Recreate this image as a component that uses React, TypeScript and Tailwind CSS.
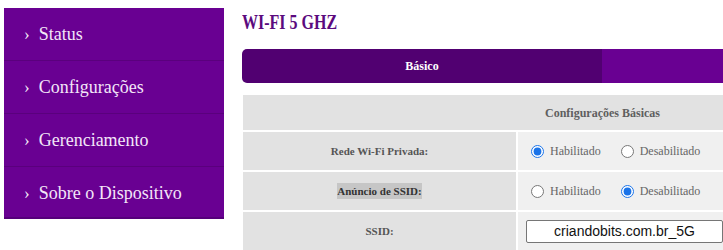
const menu = ["Status", "Configurações", "Gerenciamento", "Sobre o Dispositivo"];

const Radio = ({ checked }: { checked: boolean }) => (
  <input
    type="radio"
    readOnly
    checked={checked}
    className="m-0 h-[13px] w-[13px] accent-[#1a73e8]"
  />
);

const RadioPair = ({ on }: { on: boolean }) => (
  <div className="flex items-center pl-[13px] text-[12px] text-[#666]">
    <label className="flex items-center gap-[6px]">
      <Radio checked={on} />
      <span>Habilitado</span>
    </label>
    <label className="ml-[20px] flex items-center gap-[6px]">
      <Radio checked={!on} />
      <span>Desabilitado</span>
    </label>
  </div>
);

export default function App() {
  return (
    <div className="flex h-[250px] w-[723px] overflow-hidden bg-white font-['Liberation_Serif',serif]">
      <div className="ml-[4px] mt-[8px] h-[211px] w-[220px] shrink-0 bg-[#690092] border-b-2 border-[#55007a]">
        {menu.map((m, i) => (
          <div
            key={m}
            className={`flex h-[53px] items-center pl-[20px] text-[18px] text-[#f3e6f8] ${i < 3 ? "border-b border-[#5a007d]" : ""}`}
          >
            <span className="mr-[9px] text-[17px] leading-none">›</span>
            {m}
          </div>
        ))}
      </div>

      <div className="ml-[18px] flex w-[720px] shrink-0 flex-col">
        <div className="h-[50px] pt-[7px]">
          <span className="inline-block origin-left scale-x-[0.8] text-[20px] font-bold text-[#5b0a7e]">
            WI-FI 5 GHZ
          </span>
        </div>

        <div className="flex h-[35px] overflow-hidden rounded-l-[5px]">
          <div className="flex w-[360px] items-center justify-center bg-[#510071] text-[12px] font-bold text-white">
            Básico
          </div>
          <div className="flex-1 bg-[#690092]" />
        </div>

        <div className="mt-[12px] grid grid-cols-[273px_1fr] gap-[2px] pl-[1px] text-[11px] font-bold text-[#555]">
          <div className="col-span-2 flex h-[35px] items-center justify-center bg-[#e2e2e2] text-[12px] text-[#5f5f5f]">
            Configurações Básicas
          </div>

          <div className="flex h-[38px] items-center justify-center bg-[#e2e2e2]">
            Rede Wi-Fi Privada:
          </div>
          <div className="flex h-[38px] items-center bg-[#f0f0f0] font-normal">
            <RadioPair on />
          </div>

          <div className="flex h-[38px] items-center justify-center bg-[#e2e2e2]">
            <span className="bg-[#c6c6c6] text-[#333]">Anúncio de SSID:</span>
          </div>
          <div className="flex h-[38px] items-center bg-[#f0f0f0] font-normal">
            <RadioPair on={false} />
          </div>

          <div className="flex h-[38px] items-center justify-center bg-[#e2e2e2]">
            SSID:
          </div>
          <div className="flex h-[38px] items-center bg-[#f0f0f0] pl-[8px]">
            <input
              readOnly
              value="criandobits.com.br_5G"
              className="h-[23px] w-[197px] rounded-[2px] border border-[#767676] bg-white text-center font-['Liberation_Sans',sans-serif] text-[14px] font-normal text-[#111]"
            />
          </div>
        </div>
      </div>
    </div>
  );
}
